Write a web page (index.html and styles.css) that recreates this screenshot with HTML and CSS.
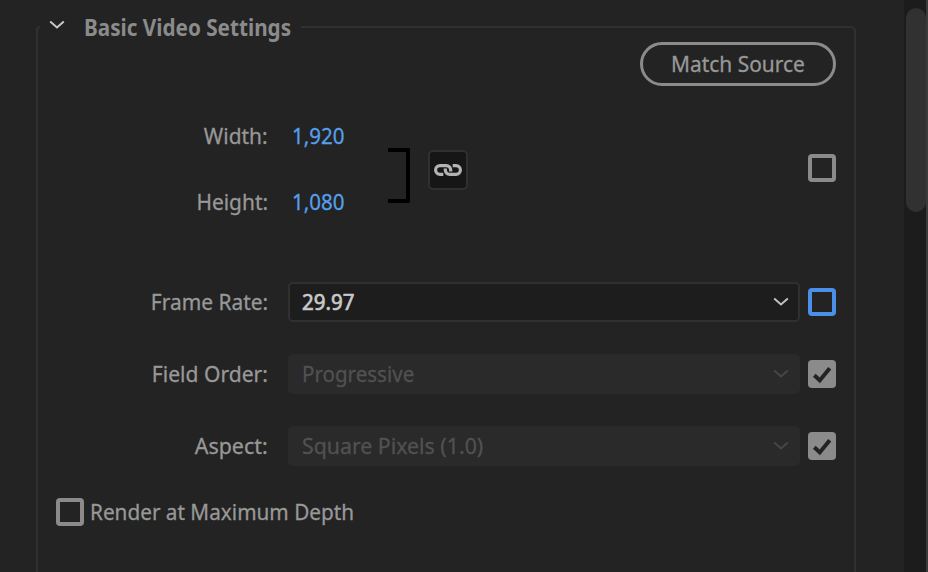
FILE: index.html
```html
<!DOCTYPE html>
<html lang="en">
<head>
<meta charset="utf-8">
<title>Video Settings</title>
<link rel="stylesheet" href="styles.css">
</head>
<body>
<main class="panel">
  <section class="group">
    <header class="legend">
      <span class="corner"></span>
      <svg class="twirl" width="16" height="10" viewBox="0 0 16 10"><path d="M1.2 1.5 8 7.5 14.8 1.5"/></svg>
      <h1><span class="t t-title">Basic Video Settings</span></h1>
      <span class="rule"></span>
    </header>
    <div class="content">
      <div class="actions"><button class="match"><span class="t t-match">Match Source</span></button></div>
      <div class="dimensions">
        <div class="pair">
          <div class="dim"><label><span class="t t-width">Width:</span></label><span class="value t">1,920</span></div>
          <div class="dim"><label><span class="t t-height">Height:</span></label><span class="value t">1,080</span></div>
        </div>
        <span class="bracket"></span>
        <button class="link" aria-label="Link dimensions">
          <svg width="30" height="16" viewBox="0 0 30 16"><path d="M10.300 12.400H7a4.400 4.400 0 0 1 0-8.800H13.300a4.400 4.400 0 0 1 4.400 4.400V9.400"/><path d="M19.700 3.600H23a4.400 4.400 0 0 1 0 8.800H16.700a4.400 4.400 0 0 1-4.400-4.400V6.600"/></svg>
        </button>
        <span class="check"></span>
      </div>
      <div class="row">
        <label><span class="t t-rate">Frame Rate:</span></label>
        <div class="select"><span class="t t-num">29.97</span><svg width="16" height="10" viewBox="0 0 16 10"><path d="M1.2 1.500 8 7.500 14.800 1.500"/></svg></div>
        <span class="check active"></span>
      </div>
      <div class="row">
        <label><span class="t t-field">Field Order:</span></label>
        <div class="select disabled"><span class="t t-prog">Progressive</span><svg width="16" height="10" viewBox="0 0 16 10"><path d="M1.200 1.500 8 7.500 14.800 1.500"/></svg></div>
        <span class="check on"><svg width="28" height="28" viewBox="0 0 28 28"><path d="M6.300 15.200 11.800 20.400 21.700 8.200"/></svg></span>
      </div>
      <div class="row">
        <label><span class="t t-aspect">Aspect:</span></label>
        <div class="select disabled"><span class="t t-square">Square Pixels (1.0)</span><svg width="16" height="10" viewBox="0 0 16 10"><path d="M1.200 1.500 8 7.500 14.800 1.500"/></svg></div>
        <span class="check on"><svg width="28" height="28" viewBox="0 0 28 28"><path d="M6.300 15.200 11.800 20.400 21.700 8.200"/></svg></span>
      </div>
      <div class="depth"><span class="check"></span><span class="t t-depth">Render at Maximum Depth</span></div>
    </div>
  </section>
</main>
<aside class="scrollbar"><span class="thumb"></span></aside>
</body>
</html>
```

FILE: styles.css
```css
* { box-sizing: border-box; }
body {
  margin: 0;
  width: 928px;
  height: 572px;
  overflow: hidden;
  display: flex;
  background: #232323;
  color: #989898;
  font: 22.5px/32px "Noto Sans", sans-serif;
}
button { font: inherit; color: inherit; padding: 0; }
svg { display: block; fill: none; flex: none; }
.t {
  --fit: 0.93;
  display: inline-block;
  white-space: nowrap;
  transform: scaleX(var(--fit));
  transform-origin: left center;
  -webkit-text-stroke: 0.3px currentColor;
}
label .t { transform-origin: right center; }
.match .t { transform-origin: center; margin: 0 -10px; }
.t-title { --fit: 0.92; }
.value { --fit: 0.912; }
.t-num { --fit: 0.912; }
.t-prog { --fit: 0.913; }
.t-square { --fit: 0.947; }
.t-aspect { --fit: 0.95; }
.t-field { --fit: 0.937; }
.t-depth { --fit: 0.922; }
.panel { width: 904px; padding: 26px 48px 0 36px; }
.group {
  height: 546px;
  border: 2px solid #303030;
  border-top: 0;
  border-bottom: 0;
  border-radius: 6px 6px 0 0;
}
.legend { display: flex; height: 16px; }
.corner {
  width: 4px;
  height: 6px;
  margin-left: -2px;
  border: solid #303030;
  border-width: 2px 0 0 2px;
  border-radius: 5px 0 0 0;
}
.twirl { margin: -6px 0 0 9px; stroke: #c8c8c8; stroke-width: 2; }
.legend h1 {
  margin: -14px 0 0 19px;
  width: 207px;
  color: #8b8b8b;
  font-size: 22.5px;
  font-weight: 700;
  line-height: 32px;
}
.legend .t { -webkit-text-stroke: 0; }
.rule {
  flex: 1;
  height: 8px;
  margin: 0 -2px 0 10px;
  border: solid #303030;
  border-width: 2px 2px 0 0;
  border-radius: 0 5px 0 0;
}
.content { padding: 0 18px; }
.actions { display: flex; justify-content: flex-end; }
.match {
  width: 196px;
  height: 44px;
  border: 3px solid #8b8b8b;
  border-radius: 22px;
  background: transparent;
}
.dimensions { display: flex; height: 164px; padding-top: 34px; }
.pair { width: 332px; }
.dim { display: flex; height: 66px; }
label { width: 212px; display: flex; justify-content: flex-end; margin-right: 20px; }
.value { margin-left: 4px; color: #569fec; }
.bracket {
  width: 22px;
  height: 55px;
  margin-top: 28px;
  border: 4px solid #000;
  border-left: 0;
  border-radius: 0 2px 2px 0;
}
.link {
  display: flex;
  align-items: center;
  justify-content: center;
  width: 40px;
  height: 40px;
  margin: 30px 0 0 18px;
  border: 2px solid #303030;
  border-radius: 5px;
  background: #161616;
}
.link svg { stroke: #b3b3b3; stroke-width: 3.2; }
.check {
  flex: none;
  width: 28px;
  height: 28px;
  border: 4px solid #8b8b8b;
  border-radius: 4px;
}
.dimensions .check { margin: 34px 0 0 auto; }
.check.active { border-color: #4b90e8; }
.check.on { border: 0; background: #8b8b8b; }
.check.on path { stroke: #232323; stroke-width: 4; }
.row { display: flex; align-items: center; height: 40px; margin-bottom: 32px; }
.dimensions + .row { margin-top: 32px; }
.select {
  display: flex;
  align-items: center;
  justify-content: space-between;
  width: 512px;
  height: 40px;
  margin-right: 8px;
  padding: 0 9px 0 12px;
  border: 2px solid #303030;
  border-radius: 5px;
  background: #1d1d1d;
  color: #c9c9c9;
}
.select svg { stroke: #c0c0c0; stroke-width: 2; }
.disabled { border-color: #2a2a2a; background: #2a2a2a; color: #515151; }
.disabled svg { stroke: #474747; }
.t-num { -webkit-text-stroke-width: 0.7px; }
.depth { display: flex; align-items: center; gap: 6px; height: 28px; }
.scrollbar {
  width: 24px;
  height: 572px;
  padding: 8px 0 0 2px;
  border-right: 2px solid #3b3b3b;
  background: #1c1c1c;
}
.thumb { display: block; width: 20px; height: 204px; border-radius: 10px; background: #313131; }
```
